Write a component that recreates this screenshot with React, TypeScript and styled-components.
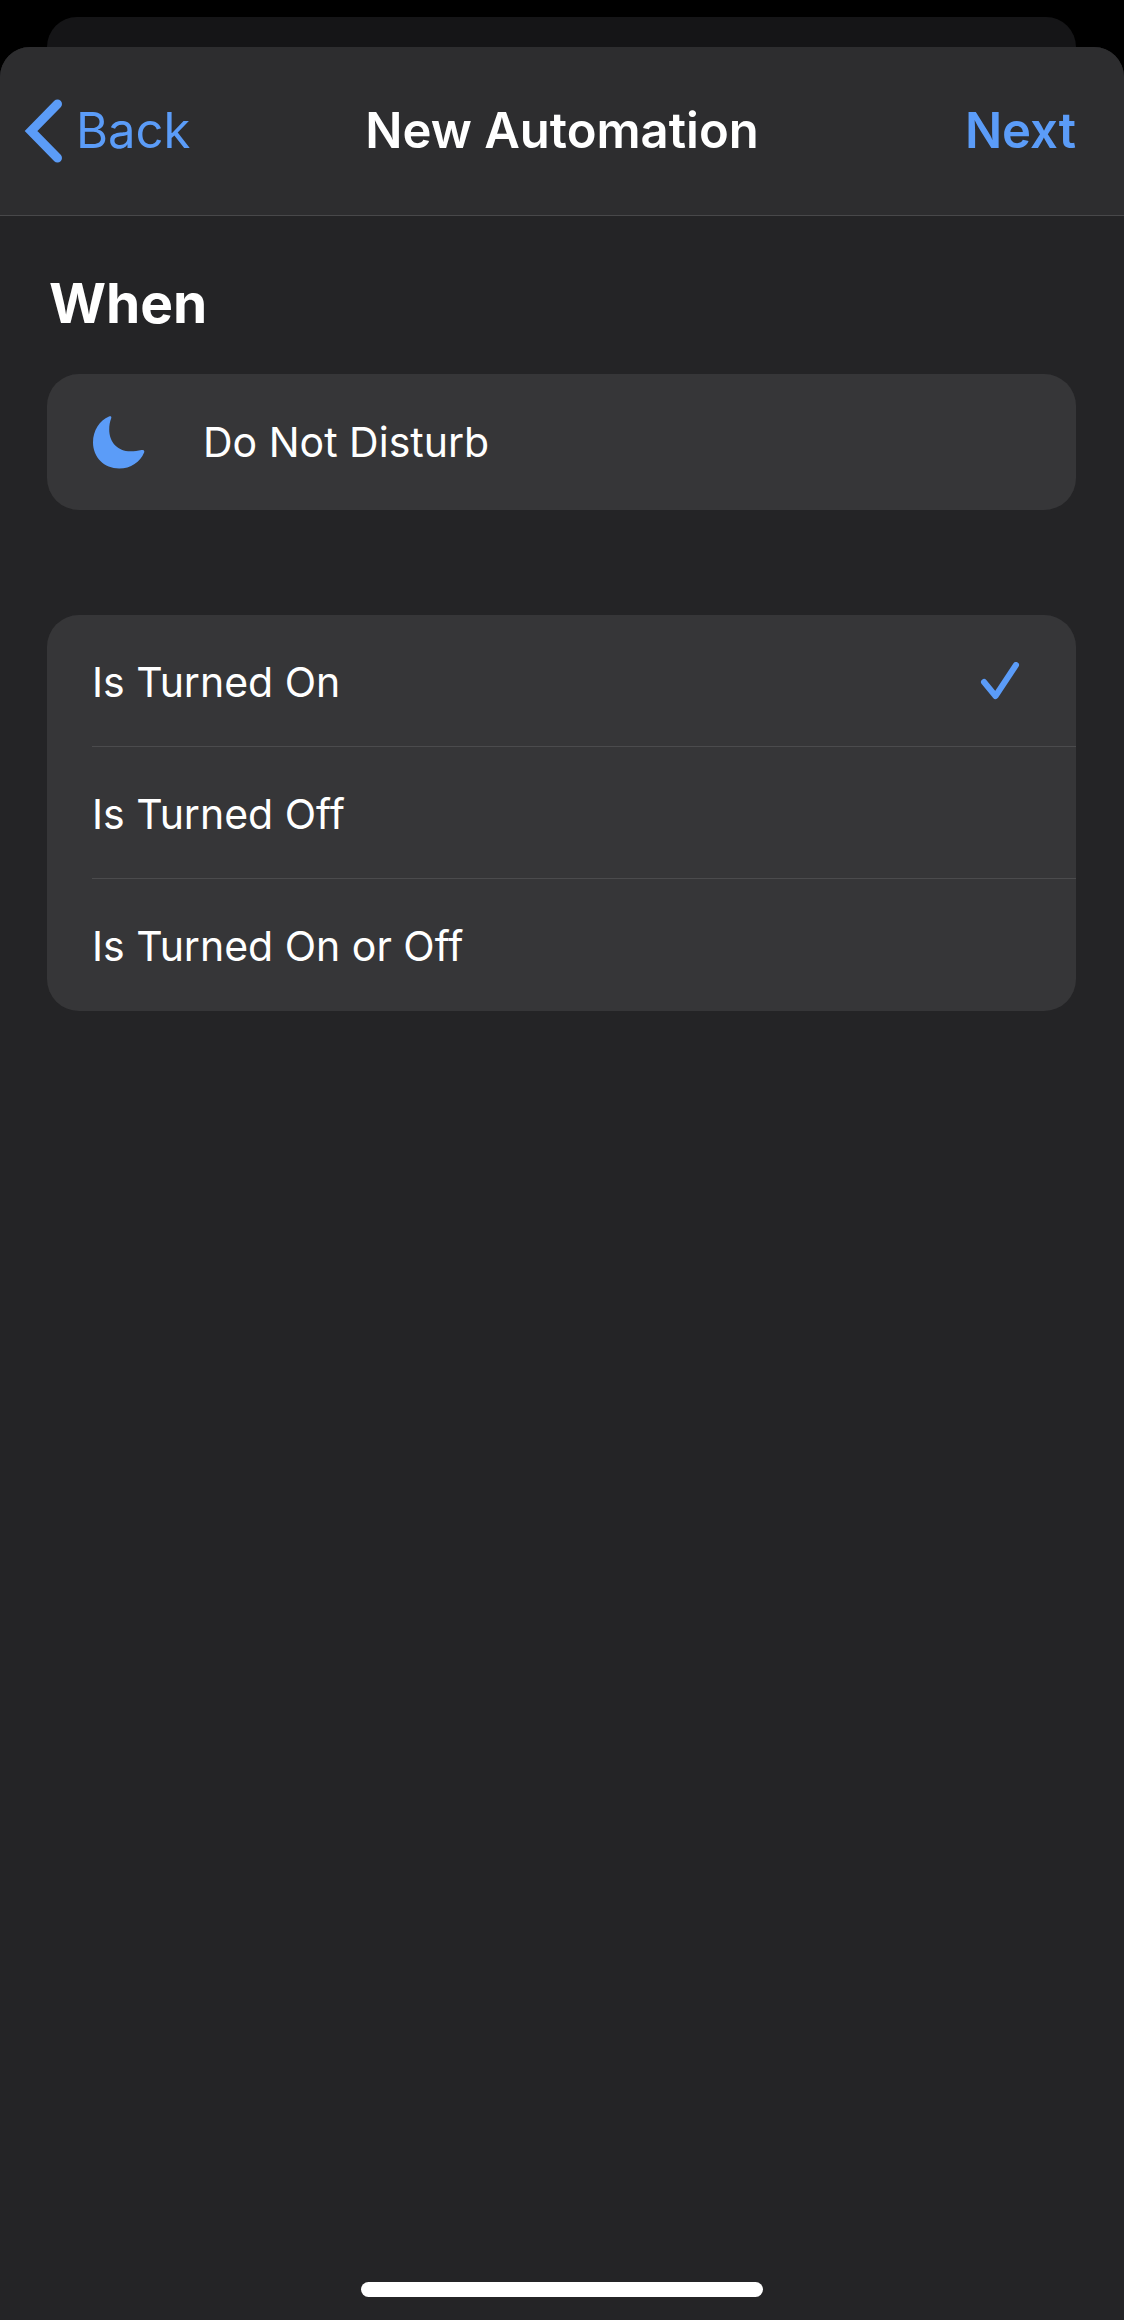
import React, { useState } from "react";
import styled, { createGlobalStyle } from "styled-components";

const accent = "#5b9cf8";

const GlobalStyle = createGlobalStyle`
  *, *::before, *::after { box-sizing: border-box; }
  body {
    margin: 0;
    background: #000;
    color: #fff;
    font-family: Inter, "Liberation Sans", sans-serif;
  }
`;

const Screen = styled.div`
  display: flex;
  flex-direction: column;
  min-height: 100vh;
  padding-top: 17px;
`;

const SheetBehind = styled.div`
  height: 30px;
  margin: 0 48px 0 47px;
  border-radius: 30px 30px 0 0;
  background: #151517;
`;

const Sheet = styled.div`
  display: flex;
  flex: 1;
  flex-direction: column;
  overflow: hidden;
  border-radius: 30px 30px 0 0;
  background: #242426;
`;

const NavBar = styled.header`
  display: grid;
  grid-template-columns: 1fr auto 1fr;
  align-items: center;
  height: 169px;
  padding: 0 24px;
  border-bottom: 1px solid #48484a;
  background: #2d2d2f;
`;

const NavTitle = styled.h1`
  margin: 0;
  font-size: 49px;
  font-weight: 600;
  line-height: 60px;
  white-space: nowrap;
`;

const NavButton = styled.button<{ $strong?: boolean; $end?: boolean }>`
  display: flex;
  align-items: center;
  justify-self: ${(p) => (p.$end ? "end" : "start")};
  gap: 12px;
  padding: ${(p) => (p.$end ? "0 24px" : "0")};
  border: 0;
  background: none;
  color: ${accent};
  font-family: inherit;
  font-size: 49px;
  font-weight: ${(p) => (p.$strong ? 600 : 400)};
  line-height: 60px;
  cursor: pointer;
`;

const Content = styled.main`
  display: flex;
  flex-direction: column;
  padding: 53px 48px 0 47px;
`;

const Heading = styled.h2`
  margin: 0 0 37px;
  padding-left: 2px;
  font-size: 55px;
  font-weight: 700;
  line-height: 68px;
`;

const Card = styled.section`
  display: flex;
  align-items: center;
  gap: 58px;
  height: 136px;
  margin-bottom: 105px;
  padding: 0 45px;
  border-radius: 32px;
  background: #363638;
  font-size: 41px;
  line-height: 50px;
`;

const Options = styled.fieldset`
  min-width: 0;
  margin: 0;
  padding: 0 0 0 45px;
  border: 0;
  border-radius: 32px;
  background: #363638;
`;

const Option = styled.label`
  display: flex;
  align-items: center;
  justify-content: space-between;
  height: 132px;
  padding: 2px 56px 0 0;
  border-bottom: 1px solid #4b4b4d;
  font-size: 41px;
  line-height: 50px;
  cursor: pointer;

  &:last-child { border-bottom: 0; }
`;

const Radio = styled.input`
  position: absolute;
  width: 1px;
  height: 1px;
  margin: 0;
  opacity: 0;
`;

const HomeIndicator = styled.div`
  width: 402px;
  height: 15px;
  margin: auto auto 23px;
  border-radius: 8px;
  background: #fff;
`;

const ChevronIcon = () => (
  <svg width="40" height="64" viewBox="0 0 40 64" fill="none" aria-hidden="true">
    <path d="M33.5 5L7 32L33.5 59" stroke={accent} strokeWidth="9" strokeLinecap="round" strokeLinejoin="miter" />
  </svg>
);

const MoonIcon = () => (
  <svg width="53" height="53" viewBox="0 0 53 53" aria-hidden="true">
    <path
      fill={accent}
      d="M17 .5C18.8-.2 19.7.5 19.2 2.2C17.8 5.8 17.2 9.3 17.2 13.5C17.2 26.3 25.8 35.3 38.5 35.3C42.3 35.3 46 34.7 49.5 34C51.7 33.5 52.8 34.6 52.1 36.4C48.3 45.8 38.7 52.5 27.2 52.5C12.2 52.5 1 41.2 1 26.5C1 14.4 7.6 4.5 17 .5Z"
    />
  </svg>
);

const CheckIcon = () => (
  <svg width="40" height="40" viewBox="0 0 40 40" fill="none" aria-hidden="true">
    <path d="M4 20L15.5 34L36 3" stroke={accent} strokeWidth="6" strokeLinecap="round" strokeLinejoin="round" />
  </svg>
);

const choices = ["Is Turned On", "Is Turned Off", "Is Turned On or Off"];

export default function App() {
  const [selected, setSelected] = useState(choices[0]);

  return (
    <>
      <GlobalStyle />
      <Screen>
        <SheetBehind />
        <Sheet>
          <NavBar>
            <NavButton type="button">
              <ChevronIcon />
              Back
            </NavButton>
            <NavTitle>New Automation</NavTitle>
            <NavButton type="button" $strong $end>
              Next
            </NavButton>
          </NavBar>
          <Content>
            <Heading>When</Heading>
            <Card>
              <MoonIcon />
              <span>Do Not Disturb</span>
            </Card>
            <Options aria-label="Do Not Disturb">
              {choices.map((choice) => (
                <Option key={choice}>
                  <Radio
                    type="radio"
                    name="trigger"
                    value={choice}
                    checked={selected === choice}
                    onChange={() => setSelected(choice)}
                  />
                  <span>{choice}</span>
                  {selected === choice && <CheckIcon />}
                </Option>
              ))}
            </Options>
          </Content>
          <HomeIndicator />
        </Sheet>
      </Screen>
    </>
  );
}
